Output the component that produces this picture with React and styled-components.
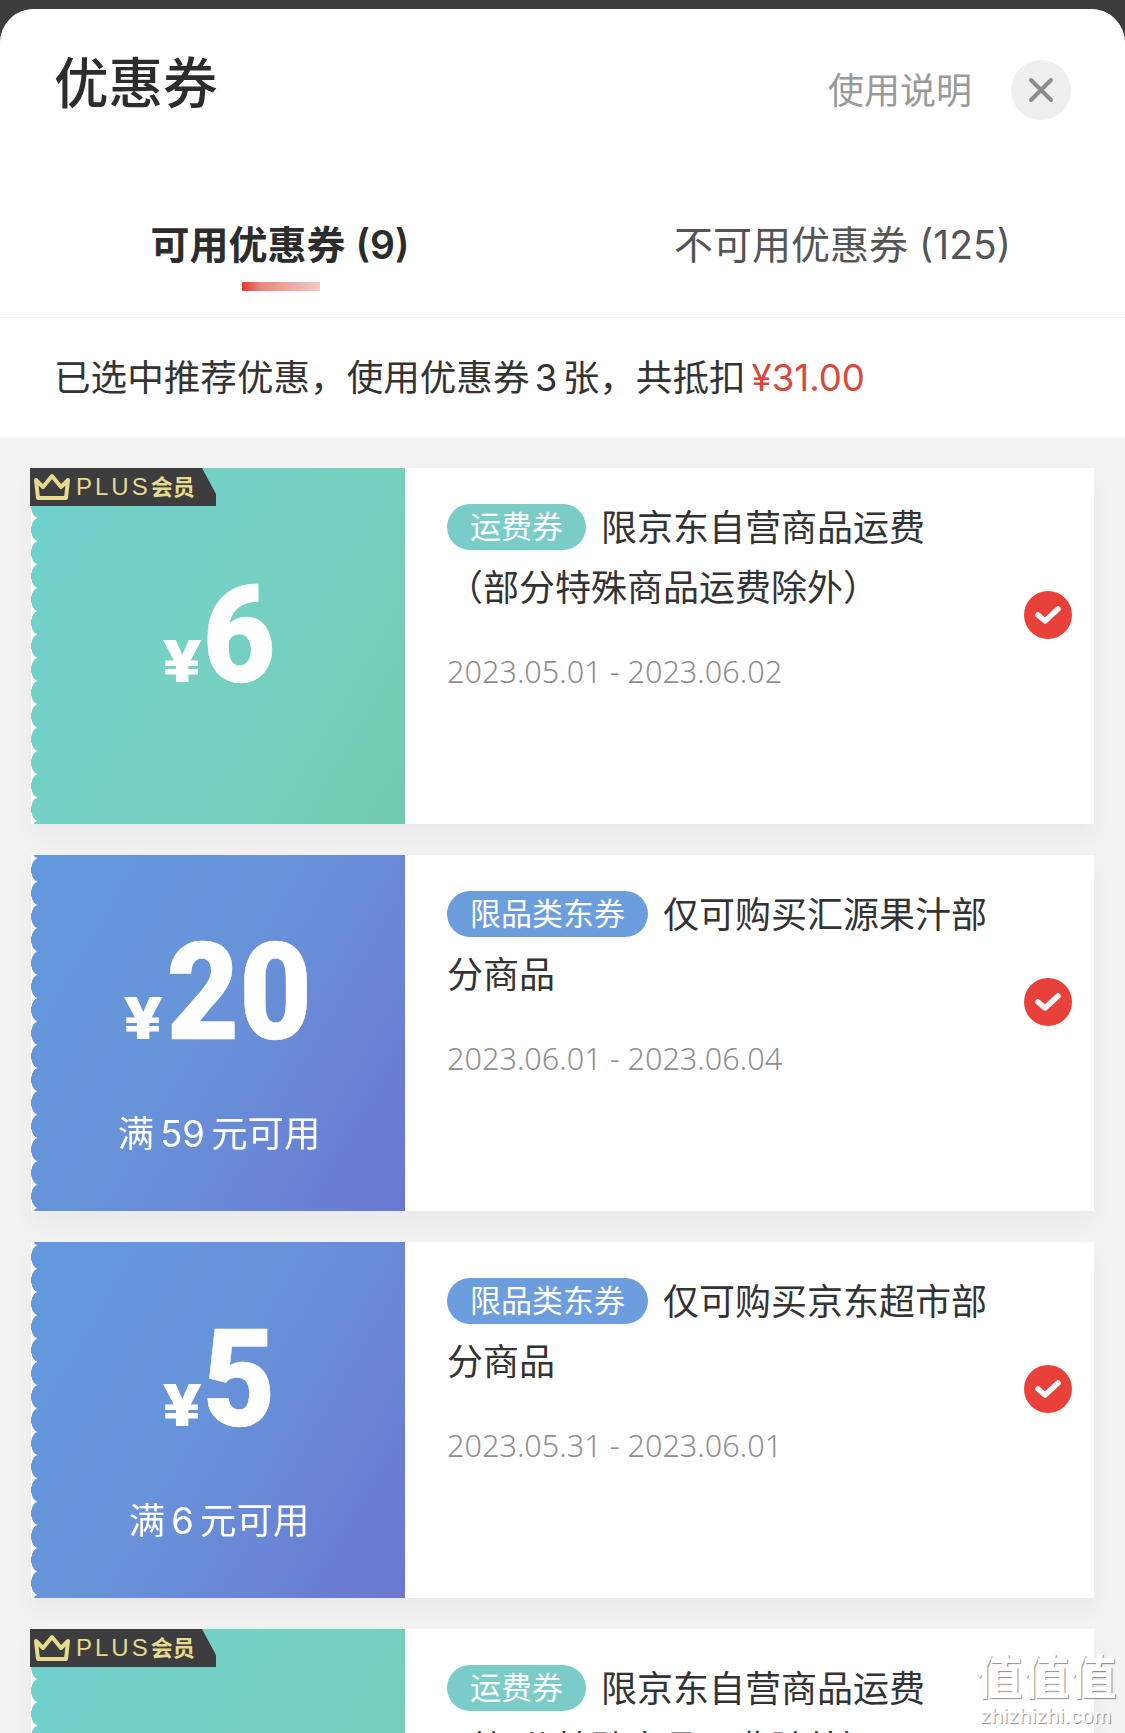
import React from "react";
import styled, { createGlobalStyle } from "styled-components";

const Global = createGlobalStyle`
  html, body { margin: 0; padding: 0; background: #3d3d3d; }
  body { font-family: "Inter", "Noto Sans CJK SC", sans-serif; }
  * { box-sizing: border-box; }
`;

const FONT = `"Inter", "Noto Sans CJK SC", sans-serif`;

const Page = styled.div`
  position: relative;
  width: 1125px;
  height: 1733px;
  overflow: hidden;
  padding-top: 9px;
  background: #3d3d3d;
`;
const Sheet = styled.div`
  height: 1724px;
  background: #f2f2f2;
  border-radius: 34px 34px 0 0;
  overflow: hidden;
`;
const Head = styled.header`
  height: 309px;
  background: #fff;
  border-bottom: 1px solid #f0f0f0;
  display: flex;
  flex-direction: column;
`;
const TopRow = styled.div`
  display: flex;
  align-items: flex-start;
  padding: 47px 54px 0 54px;
  height: 209px;
`;
const Title = styled.h1`
  flex: 1;
  margin: 0;
  font: 500 54.5px/1 ${FONT};
  color: #2c2c2c;
`;
const Help = styled.span`
  font: 400 36px/1 ${FONT};
  color: #9a9a9a;
  margin: 17px 39px 0 0;
`;
const Close = styled.button`
  width: 60px;
  height: 60px;
  border: 0;
  padding: 0;
  border-radius: 50%;
  background: #efefef;
  display: flex;
  align-items: center;
  justify-content: center;
  margin-top: 4px;
`;
const Tabs = styled.nav`
  display: grid;
  grid-template-columns: 560px 1fr;
`;
const Tab = styled.div`
  display: flex;
  flex-direction: column;
  align-items: center;
  font: ${p => (p.$active ? 600 : 400)} 39px/54px ${FONT};
  color: ${p => (p.$active ? "#2c2c2c" : "#555")};
`;
const Underline = styled.i`
  display: block;
  width: 78px;
  height: 9px;
  margin: 10px 0 0 2px;
  background: linear-gradient(90deg, #e3392c 0%, #e88a80 25%, #f3c9c4 100%);
`;
const Summary = styled.div`
  height: 120px;
  background: #fff;
  padding-left: 54px;
  display: flex;
  align-items: center;
  font: 400 36.6px/1 ${FONT};
  word-spacing: -5px;
  color: #333;
`;
const Price = styled.span`
  color: #d9483b;
  margin-left: 6px;
`;
const List = styled.div`
  padding: 30px 31px;
  display: flex;
  flex-direction: column;
  gap: 31px;
`;
const Card = styled.article`
  position: relative;
  flex: none;
  height: 356px;
  display: flex;
  background: #fff;
  box-shadow: 0 12px 22px rgba(0, 0, 0, 0.035);
`;
const Panel = styled.div`
  width: 374px;
  flex: none;
  display: flex;
  flex-direction: column;
  align-items: center;
  padding-top: ${p => p.$top}px;
  color: #fff;
  background: ${p =>
    p.$kind === "ship"
      ? "linear-gradient(120deg, #6fd0cd 0%, #76d1c4 45%, #72cbb0 100%)"
      : "linear-gradient(120deg, #6299dc 0%, #6893d9 45%, #6b77d2 100%)"};
  border-radius: 4px 0 0 4px;
  -webkit-mask-image: linear-gradient(#000, #000), radial-gradient(ellipse 8px 12px at 8px 50%, #000 96%, transparent 100%);
  -webkit-mask-size: calc(100% - 6px) 100%, 8px 23.3px;
  -webkit-mask-position: right top, left 3.35px;
  -webkit-mask-repeat: no-repeat, repeat-y;
  mask-image: linear-gradient(#000, #000), radial-gradient(ellipse 8px 12px at 8px 50%, #000 96%, transparent 100%);
  mask-size: calc(100% - 6px) 100%, 8px 23.3px;
  mask-position: right top, left 3.35px;
  mask-repeat: no-repeat, repeat-y;
`;
const Amount = styled.div`
  display: flex;
  align-items: baseline;
  height: 120px;
  line-height: 120px;
  font-family: "Roboto", sans-serif;
  font-weight: 900;
`;
const Yen = styled.span`
  display: inline-block;
  font-size: 60px;
  font-weight: 900;
  transform: scaleX(1.2);
  margin: 0 6px 0 4px;
`;
const Digits = styled.span`
  display: inline-block;
  font-size: 135px;
  transform: scaleX(0.93);
  margin: 0 -4px;
  -webkit-text-stroke: 0.5px #fff;
`;
const Cond = styled.div`
  margin: 56px 0 0 2px;
  font: 400 36.4px/50px ${FONT};
  word-spacing: -4px;
`;
const Badge = styled.div`
  position: absolute;
  left: -1px;
  top: 0;
  width: 186px;
  height: 38px;
  background: #3d3d3f;
  clip-path: polygon(0 0, 172px 0, 186px 26px, 186px 38px, 0 38px);
  display: flex;
  align-items: center;
  padding-left: 3px;
  color: #e6da8e;
  font: 500 24px/1 ${FONT};
`;
const BadgeCjk = styled.span`
  font-weight: 700;
  font-size: 22px;
`;
const BadgeLatin = styled.span`
  font-family: "Liberation Sans", sans-serif;
  font-weight: 400;
  letter-spacing: 3px;
  margin-left: 5px;
`;
const Body = styled.div`
  flex: 1;
  position: relative;
  padding: 30px 0 0 42px;
`;
const Desc = styled.div`
  width: 548px;
  font: 400 36px/60px ${FONT};
  color: #333;
`;
const Tag = styled.span`
  display: inline-block;
  height: 46px;
  line-height: 46px;
  vertical-align: 3px;
  padding: 0 23px;
  margin-right: 15px;
  border-radius: 23px;
  font-size: 31px;
  color: #fff;
  background: ${p => (p.$kind === "ship" ? "#7accc8" : "#6c9ddd")};
`;
const Dates = styled.div`
  margin-top: 33px;
  font: 300 30.6px/40px "Noto Sans", sans-serif;
  color: #8f8f8f;
`;
const Check = styled.svg`
  position: absolute;
  right: 22px;
  top: 123px;
`;
const Mark = styled.div`
  position: absolute;
  right: 8px;
  bottom: 6px;
  width: 142px;
  text-align: center;
  color: #fff;
  text-shadow: 1px 1px 1px rgba(0, 0, 0, 0.45);
  pointer-events: none;
`;
const MarkGlyph = styled.div`
  font: 700 47px/54px "Noto Sans CJK SC", sans-serif;
  white-space: nowrap;
`;
const MarkUrl = styled.div`
  margin-top: 4px;
  font: 400 21px/22px "Liberation Sans", sans-serif;
  letter-spacing: 0.4px;
`;

const CrownIcon = () => (
  <svg width="38" height="28" viewBox="0 0 38 28" fill="none" stroke="#e6da8e" strokeWidth="4" strokeLinejoin="round">
    <path d="M3 7 L10 14 L19 3 L28 14 L35 7 L33 25 H5 Z" />
  </svg>
);

const coupons = [
  { kind: "ship", plus: true, tag: "运费券", text: "限京东自营商品运费（部分特殊商品运费除外）", date: "2023.05.01 - 2023.06.02", value: "6", top: 108 },
  { kind: "cat", tag: "限品类东券", text: "仅可购买汇源果汁部分商品", date: "2023.06.01 - 2023.06.04", value: "20", cond: "满 59 元可用", top: 78 },
  { kind: "cat", tag: "限品类东券", text: "仅可购买京东超市部分商品", date: "2023.05.31 - 2023.06.01", value: "5", cond: "满 6 元可用", top: 78 },
  { kind: "ship", plus: true, tag: "运费券", text: "限京东自营商品运费（部分特殊商品运费除外）", date: "2023.05.01 - 2023.06.02", value: "6", top: 108 },
];

export default function App() {
  return (
    <Page>
      <Global />
      <Sheet>
        <Head>
          <TopRow>
            <Title>优惠券</Title>
            <Help>使用说明</Help>
            <Close aria-label="关闭">
              <svg width="26" height="26" viewBox="0 0 26 26" stroke="#8c8c8c" strokeWidth="4" strokeLinecap="round">
                <path d="M3 3 L23 23 M23 3 L3 23" />
              </svg>
            </Close>
          </TopRow>
          <Tabs>
            <Tab $active>
              可用优惠券 (9)
              <Underline />
            </Tab>
            <Tab>不可用优惠券 (125)</Tab>
          </Tabs>
        </Head>
        <Summary>
          已选中推荐优惠，使用优惠券 3 张，共抵扣<Price>¥31.00</Price>
        </Summary>
        <List>
          {coupons.map((c, i) => (
            <Card key={i}>
              <Panel $kind={c.kind} $top={c.top}>
                <Amount>
                  <Yen>¥</Yen>
                  <Digits>{c.value}</Digits>
                </Amount>
                {c.cond && <Cond>{c.cond}</Cond>}
              </Panel>
              {c.plus && (
                <Badge>
                  <CrownIcon />
                  <BadgeLatin>PLUS</BadgeLatin>
                  <BadgeCjk>会员</BadgeCjk>
                </Badge>
              )}
              <Body>
                <Desc>
                  <Tag $kind={c.kind}>{c.tag}</Tag>
                  {c.text}
                </Desc>
                <Dates>{c.date}</Dates>
                <Check width="48" height="48" viewBox="0 0 48 48">
                  <circle cx="24" cy="24" r="24" fill="#e8413a" />
                  <path d="M14 24 L21 30 L34 18" fill="none" stroke="#fff" strokeWidth="5.5" strokeLinecap="round" strokeLinejoin="round" />
                </Check>
              </Body>
            </Card>
          ))}
        </List>
      </Sheet>
      <Mark>
        <MarkGlyph>值值值</MarkGlyph>
        <MarkUrl>zhizhizhi.com</MarkUrl>
      </Mark>
    </Page>
  );
}
